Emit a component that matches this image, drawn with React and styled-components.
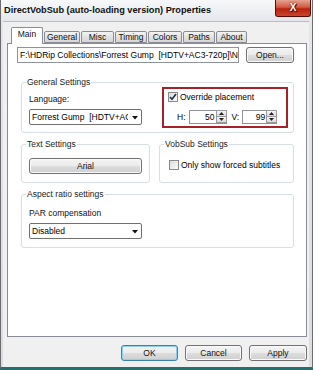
import React from 'react';
import styled, { createGlobalStyle } from 'styled-components';

const GlobalStyle = createGlobalStyle`
  * { box-sizing: border-box; }
  html, body { margin: 0; padding: 0; background: #ffffff; }
  body {
    font-family: 'Liberation Sans', Arial, sans-serif;
    font-size: 8.5px;
    color: #000;
  }
`;

const tabs = [
  { label: 'Main', width: 32, active: true },
  { label: 'General', width: 36 },
  { label: 'Misc', width: 33 },
  { label: 'Timing', width: 32 },
  { label: 'Colors', width: 34 },
  { label: 'Paths', width: 32 },
  { label: 'About', width: 31 },
];

const Arrow = ({ up }) => (
  <svg width="5" height="3" viewBox="0 0 5 3">
    <path d={up ? 'M0 3 L2.5 0 L5 3 Z' : 'M0 0 L5 0 L2.5 3 Z'} fill="#222" />
  </svg>
);

const Check = ({ checked }) => (
  <CheckBox>
    {checked && (
      <svg width="8" height="8" viewBox="0 0 8 8">
        <path d="M1 4 L3 6.3 L7 1" fill="none" stroke="#1c2f4a" strokeWidth="1.6" />
      </svg>
    )}
  </CheckBox>
);

const SpinEdit = ({ value, width }) => (
  <SpinBox width={width}>
    <SpinValue>{value}</SpinValue>
    <SpinButtons>
      <SpinBtn><Arrow up /></SpinBtn>
      <SpinBtn><Arrow /></SpinBtn>
    </SpinButtons>
  </SpinBox>
);

const Combo = ({ children }) => (
  <ComboBox>
    <ComboText>{children}</ComboText>
    <ComboArrow>
      <svg width="6" height="4" viewBox="0 0 6 4"><path d="M0 0 L6 0 L3 3.5 Z" fill="#111" /></svg>
    </ComboArrow>
  </ComboBox>
);

export default function App() {
  return (
    <>
      <GlobalStyle />
      <Window>
        <TitleBar>
          <TitleText>DirectVobSub (auto-loading version) Properties</TitleText>
          <CloseButton>X</CloseButton>
        </TitleBar>
        <Client>
          <TabStrip>
            {tabs.map(t => (
              <Tab key={t.label} width={t.width} active={t.active}>{t.label}</Tab>
            ))}
          </TabStrip>
          <Panel>
            <PathRow>
              <TextBox>F:\HDRip Collections\Forrest Gump  [HDTV+AC3-720p]\N</TextBox>
              <Button width={48}>Open...</Button>
            </PathRow>

            <Group top={13}>
              <Legend>General Settings</Legend>
              <GeneralBody>
                <Column>
                  <Label top={7}>Language:</Label>
                  <Spacer h={5} />
                  <Combo>Forrest Gump  [HDTV+AC</Combo>
                </Column>
                <OverrideBox>
                  <CheckRow>
                    <Check checked />
                    <span>Override placement</span>
                  </CheckRow>
                  <SpinRow>
                    <span>H:</span>
                    <SpinEdit value="50" width={38} />
                    <VLabel>V:</VLabel>
                    <SpinEdit value="99" width={35} />
                  </SpinRow>
                </OverrideBox>
              </GeneralBody>
            </Group>

            <GroupRow>
              <Group grow="129px">
                <Legend>Text Settings</Legend>
                <Spacer h={9} />
                <Button width={113}>Arial</Button>
              </Group>
              <Group grow="1">
                <Legend>VobSub Settings</Legend>
                <CheckRow top={11}>
                  <Check />
                  <span>Only show forced subtitles</span>
                </CheckRow>
              </Group>
            </GroupRow>

            <Group top={6} bottom={8}>
              <Legend>Aspect ratio settings</Legend>
              <Label top={9}>PAR compensation</Label>
              <Spacer h={5} />
              <Combo>Disabled</Combo>
            </Group>
          </Panel>
          <Footer>
            <Button width={57} isDefault>OK</Button>
            <Button width={57}>Cancel</Button>
            <Button width={58}>Apply</Button>
          </Footer>
        </Client>
      </Window>
    </>
  );
}

const Window = styled.div`
  width: 313px;
  height: 370px;
  display: flex;
  flex-direction: column;
  background: linear-gradient(#f7f8f9 0px, #e3e6ea 22px, #d9dde2 100%);
  border-left: 1px solid #6c6c6c;
  border-right: 1px solid #6c6c6c;
  border-bottom: 3px solid #23706f;
`;

const TitleBar = styled.div`
  height: 21px;
  display: flex;
  justify-content: space-between;
  align-items: flex-start;
  padding-left: 3px;
`;

const TitleText = styled.div`
  margin-top: 5px;
  font-weight: bold;
  font-size: 9.2px;
  line-height: 10px;
  color: #111;
  white-space: nowrap;
`;

const CloseButton = styled.div`
  width: 36px;
  height: 17px;
  margin-right: 1px;
  border: 1px solid #5a0c0c;
  border-top: none;
  border-radius: 0 0 3px 3px;
  background: linear-gradient(#e6a291 0%, #d35a45 45%, #b8220f 55%, #c9452c 100%);
  color: #fff;
  font-weight: bold;
  font-size: 10px;
  line-height: 16px;
  text-align: center;
  text-shadow: 0 0 2px #400, 1px 1px 0 #600;
`;

const Client = styled.div`
  flex: 1;
  display: flex;
  flex-direction: column;
  margin: 0 3px 0 2px;
  padding: 6px 2px 6px 4px;
  background: #f0f0f0;
  border-top: 1px solid #b9bec6;
`;

const TabStrip = styled.div`
  height: 15px;
  display: flex;
  align-items: flex-end;
  gap: 1px;
  padding-left: 4px;
  position: relative;
  z-index: 1;
`;

const Tab = styled.div`
  width: ${p => p.width}px;
  height: ${p => (p.active ? 17 : 12)}px;
  margin-bottom: ${p => (p.active ? -1 : 0)}px;
  border: 1px solid #898c95;
  border-bottom: ${p => (p.active ? 'none' : '1px solid #898c95')};
  border-radius: 2px 2px 0 0;
  background: ${p => (p.active ? '#ffffff' : 'linear-gradient(#f4f4f4, #e2e2e2 50%, #d6d6d6)')};
  text-align: center;
  line-height: ${p => (p.active ? 13 : 10)}px;
  color: #111;
  white-space: nowrap;
`;

const Panel = styled.div`
  flex: 1;
  display: flex;
  flex-direction: column;
  background: #ffffff;
  border: 1px solid #898c95;
  padding: 3px 12px 0 9px;
`;

const PathRow = styled.div`
  display: flex;
  gap: 7px;
  height: 17px;
`;

const TextBox = styled.div`
  flex: 1;
  height: 16px;
  border: 1px solid #8e9299;
  background: #fff;
  padding: 0 2px;
  line-height: 14px;
  white-space: pre;
  overflow: hidden;
`;

const Button = styled.div`
  width: ${p => p.width}px;
  height: 16px;
  border: 1px solid ${p => (p.isDefault ? '#3c7fb1' : '#707070')};
  border-radius: 3px;
  background: linear-gradient(#f4f4f4 0%, #ebebeb 48%, #dddddd 52%, #cfcfcf 100%);
  box-shadow: inset 0 0 0 1px ${p => (p.isDefault ? '#8fd0f0' : '#fbfbfb')};
  text-align: center;
  line-height: 14px;
  color: #111;
  white-space: nowrap;
`;

const Group = styled.fieldset`
  margin: ${p => p.top || 0}px 0 0 4px;
  padding: 0 5px ${p => p.bottom ?? 4}px 7px;
  border: 1px solid #d5dfe5;
  border-radius: 3px;
  min-width: 0;
  flex: ${p => (p.grow === '1' ? '1' : `0 0 ${p.grow || 'auto'}`)};
`;

const Legend = styled.legend`
  padding: 0 1px;
  margin-left: -3px;
  line-height: 10px;
  color: #1b1b1b;
`;

const GroupRow = styled.div`
  display: flex;
  gap: 9px;
  margin-top: 6px;
  & > fieldset { margin-left: 0; padding-bottom: 8px; }
  margin-left: 4px;
`;

const GeneralBody = styled.div`
  display: flex;
  justify-content: space-between;
  align-items: flex-start;
`;

const Column = styled.div`
  display: flex;
  flex-direction: column;
`;

const Label = styled.div`
  margin-top: ${p => p.top || 0}px;
  line-height: 10px;
  color: #111;
`;

const Spacer = styled.div`
  height: ${p => p.h}px;
`;

const ComboBox = styled.div`
  width: 113px;
  height: 16px;
  display: flex;
  align-items: center;
  border: 1px solid #707070;
  border-radius: 2px;
  background: #fff;
`;

const ComboText = styled.div`
  flex: 1;
  overflow: hidden;
  white-space: pre;
  padding-left: 2px;
  line-height: 14px;
`;

const ComboArrow = styled.div`
  width: 13px;
  display: flex;
  justify-content: center;
  align-items: center;
  padding-top: 1px;
`;

const OverrideBox = styled.div`
  width: 126px;
  height: 41px;
  border: 2px solid #a52228;
  padding: 3px 0 0 4px;
`;

const CheckRow = styled.div`
  display: flex;
  align-items: center;
  gap: 2px;
  line-height: 10px;
  margin-top: ${p => p.top || 0}px;
  padding-left: ${p => (p.top ? 2 : 0)}px;
`;

const CheckBox = styled.div`
  width: 10px;
  height: 10px;
  border: 1px solid #8a8a8a;
  background: linear-gradient(135deg, #dcdcdc, #fbfbfb);
  display: flex;
  align-items: center;
  justify-content: center;
`;

const SpinRow = styled.div`
  display: flex;
  align-items: center;
  gap: 3px;
  margin-top: 8px;
  padding-left: 9px;
`;

const VLabel = styled.span`
  margin-left: 2px;
`;

const SpinBox = styled.div`
  width: ${p => p.width}px;
  height: 14px;
  display: flex;
  border: 1px solid #8e9299;
  background: #fff;
`;

const SpinValue = styled.div`
  flex: 1;
  text-align: right;
  padding-right: 1px;
  line-height: 12px;
`;

const SpinButtons = styled.div`
  width: 10px;
  display: flex;
  flex-direction: column;
`;

const SpinBtn = styled.div`
  flex: 1;
  display: flex;
  align-items: center;
  justify-content: center;
  border: 1px solid #9a9a9a;
  margin: -1px -1px 0 0;
  background: linear-gradient(#f6f6f6, #dadada);
`;

const Footer = styled.div`
  display: flex;
  justify-content: flex-end;
  gap: 7px;
  margin-top: 8px;
`;
